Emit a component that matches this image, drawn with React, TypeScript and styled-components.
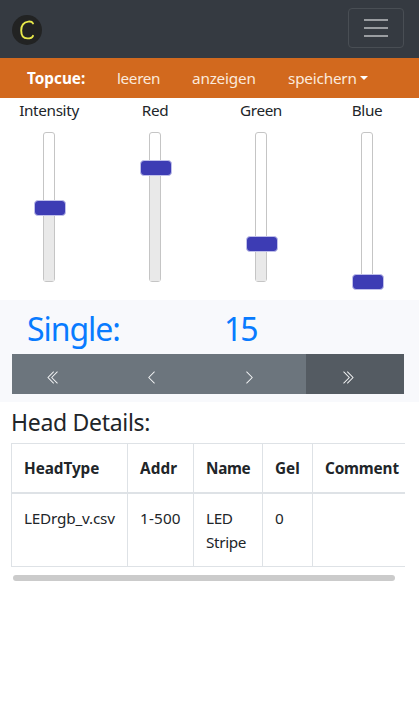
import React from "react";
import styled, { createGlobalStyle } from "styled-components";
import {
  BsChevronDoubleLeft,
  BsChevronLeft,
  BsChevronRight,
  BsChevronDoubleRight,
} from "react-icons/bs";

const GlobalStyle = createGlobalStyle`
  *, *::before, *::after { box-sizing: border-box; }
  body {
    margin: 0;
    background: #fff;
    color: #212529;
    font: 400 15.3px/24px "Segoe UI", "Noto Sans", sans-serif;
    overflow: hidden;
  }
`;

const Text = styled.span<{ $track?: number }>`
  letter-spacing: ${(p) => p.$track ?? 0}px;
  white-space: nowrap;
`;

const Header = styled.header`
  height: 58px;
  padding: 8px 15px 10px 12px;
  display: flex;
  justify-content: space-between;
  background: #353a41;
`;

const Logo = styled.svg`
  width: 30px;
  height: 30px;
  margin-top: 7px;
`;

const Toggler = styled.button`
  width: 56px;
  height: 40px;
  padding: 0;
  display: flex;
  align-items: center;
  justify-content: center;
  border: 1px solid #494e54;
  border-radius: 4px;
  background: transparent;
`;

const CueBar = styled.nav`
  height: 40px;
  padding-left: 27px;
  display: flex;
  align-items: center;
  background: #d2691e;
  color: #fbe9dc;
`;

const CueTitle = styled.strong`
  width: 90px;
  color: #fff;
  font-weight: 700;
`;

const CueLink = styled.a<{ $width: number }>`
  width: ${(p) => p.$width}px;
  display: flex;
  align-items: center;
  white-space: nowrap;
`;

const Caret = styled.i`
  margin-left: 3px;
  border: 4.5px solid transparent;
  border-top-color: #fff;
  border-bottom: 0;
`;

const Faders = styled.section`
  height: 202px;
  margin-left: -4px;
  display: grid;
  grid-template-columns: repeat(4, 106px);
`;

const Fader = styled.div`
  display: flex;
  flex-direction: column;
  align-items: center;
  gap: 10px;
`;

const Track = styled.div`
  position: relative;
  width: 12px;
  height: 150px;
  display: flex;
  align-items: flex-end;
  border: 1px solid #c5c5c5;
  border-radius: 3px;
  background: #fff;
`;

const Fill = styled.div`
  width: 100%;
  background: #e9e9e9;
`;

const Handle = styled.div`
  position: absolute;
  left: -10px;
  width: 32px;
  height: 16px;
  border: 1px solid #c0c0ea;
  border-radius: 4px;
  background: #3d3cb4;
`;

const Cue = styled.section`
  height: 102px;
  padding: 0 15px 8px 12px;
  background: #f8f9fc;
`;

const CueReadout = styled.div`
  height: 54px;
  padding: 6px 0 0 15px;
  display: grid;
  grid-template-columns: 197px 1fr;
  font-size: 32px;
  line-height: 46px;
  color: #087bff;
`;

const Buttons = styled.div`
  height: 40px;
  display: grid;
  grid-template-columns: repeat(4, 1fr);
`;

const StepButton = styled.button<{ $active?: boolean }>`
  padding: 6px 16px 0 0;
  display: flex;
  align-items: center;
  justify-content: center;
  border: 0;
  background: ${(p) => (p.$active ? "#545b62" : "#6c757d")};
  color: #f4f5f6;
  font-size: 15px;
`;

const Details = styled.section`
  padding: 0 14px 0 11px;
`;

const Heading = styled.h4`
  height: 41px;
  margin: 0;
  font-size: 23px;
  line-height: 40px;
  font-weight: 400;
`;

const TableScroll = styled.div`
  overflow: hidden;
  width: 394px;
`;

const Table = styled.table`
  width: 402px;
  table-layout: fixed;
  border-collapse: separate;
  border-spacing: 0;
  border-top: 1px solid #dee2e6;
  border-left: 1px solid #dee2e6;
`;

const HeadCell = styled.th<{ $width: number }>`
  width: ${(p) => p.$width}px;
  height: 50px;
  padding: 0 0 1px 12px;
  text-align: left;
  border-right: 1px solid #dee2e6;
  border-bottom: 2px solid #dee2e6;
`;

const Cell = styled.td`
  height: 73px;
  padding: 12px 0 0 12px;
  vertical-align: top;
  border-right: 1px solid #dee2e6;
  border-bottom: 1px solid #dee2e6;
`;

const ScrollThumb = styled.div`
  width: 382px;
  height: 6px;
  margin: 8px 0 0 2px;
  border-radius: 3px;
  background: #cbcbcb;
`;

const faders = [
  { name: "Intensity", track: -0.35, top: 67 },
  { name: "Red", track: -0.3, top: 27 },
  { name: "Green", track: -0.4, top: 103 },
  { name: "Blue", track: -0.4, top: 141 },
];

const columns = [
  { name: "HeadType", width: 116, track: -0.05 },
  { name: "Addr", width: 66, track: 0.15 },
  { name: "Name", width: 69, track: -0.3 },
  { name: "Gel", width: 50, track: 0 },
  { name: "Comment", width: 100, track: -0.15 },
];

export default function App() {
  return (
    <>
      <GlobalStyle />
      <Header>
        <Logo viewBox="0 0 30 30">
          <circle cx="15" cy="15" r="15" fill="#222323" />
          <path
            d="M21 8.4C20.2 6.9 18.6 6.3 16.3 6.6C11.8 7.2 9.2 10.5 9.2 15.5C9.2 20.7 11.5 23.4 15.4 23.4C18.3 23.4 20.3 22.5 21 20.8"
            fill="none"
            stroke="#e8e94b"
            strokeWidth="1.9"
            strokeLinecap="round"
          />
        </Logo>
        <Toggler aria-label="Menu">
          <svg width="24" height="20" viewBox="0 0 24 20">
            <path d="M0 2H24M0 10H24M0 18H24" stroke="#9a9da1" strokeWidth="2" />
          </svg>
        </Toggler>
      </Header>
      <CueBar>
        <CueTitle>Topcue:</CueTitle>
        <CueLink $width={75}><Text $track={-0.35}>leeren</Text></CueLink>
        <CueLink $width={96}><Text $track={-0.2}>anzeigen</Text></CueLink>
        <CueLink $width={90}><Text $track={-0.2}>speichern</Text><Caret /></CueLink>
      </CueBar>
      <Faders>
        {faders.map((f) => (
          <Fader key={f.name}>
            <Text $track={f.track}>{f.name}</Text>
            <Track>
              <Fill style={{ height: 141 - f.top }} />
              <Handle style={{ top: f.top }} />
            </Track>
          </Fader>
        ))}
      </Faders>
      <Cue>
        <CueReadout>
          <Text $track={-1.05}>Single:</Text>
          <Text $track={-2}>15</Text>
        </CueReadout>
        <Buttons>
          <StepButton aria-label="First"><BsChevronDoubleLeft /></StepButton>
          <StepButton aria-label="Previous"><BsChevronLeft /></StepButton>
          <StepButton aria-label="Next"><BsChevronRight /></StepButton>
          <StepButton aria-label="Last" $active><BsChevronDoubleRight /></StepButton>
        </Buttons>
      </Cue>
      <Details>
        <Heading><Text $track={-0.3}>Head Details:</Text></Heading>
        <TableScroll>
          <Table>
            <thead>
              <tr>
                {columns.map((c) => (
                  <HeadCell key={c.name} $width={c.width}>
                    <Text $track={c.track}>{c.name}</Text>
                  </HeadCell>
                ))}
              </tr>
            </thead>
            <tbody>
              <tr>
                <Cell><Text $track={-0.2}>LEDrgb_v.csv</Text></Cell>
                <Cell><Text $track={0.15}>1-500</Text></Cell>
                <Cell><Text $track={-0.35}>LED<br />Stripe</Text></Cell>
                <Cell>0</Cell>
                <Cell />
              </tr>
            </tbody>
          </Table>
        </TableScroll>
        <ScrollThumb />
      </Details>
    </>
  );
}
